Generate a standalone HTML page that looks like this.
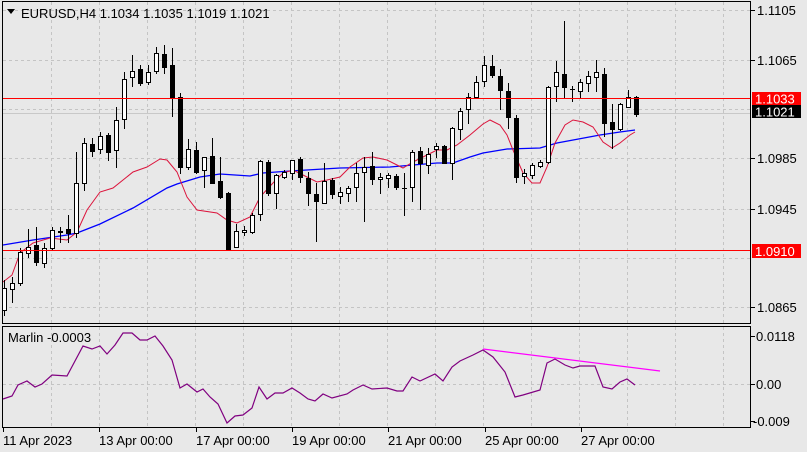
<!DOCTYPE html>
<html><head><meta charset="utf-8"><style>
html,body{margin:0;padding:0;background:#e8e8e8;}
body{width:807px;height:452px;overflow:hidden;font-family:"Liberation Sans",sans-serif;}
svg{display:block}
</style></head><body>
<svg id="s" width="807" height="452" xmlns="http://www.w3.org/2000/svg" font-family="Liberation Sans, sans-serif" font-size="13">
<rect x="0" y="0" width="807" height="452" fill="#e8e8e8"/>
<g id="grid" stroke="#c4c4c4" stroke-dasharray="3,3" stroke-width="1"></g>
<line x1="2" y1="113.5" x2="750" y2="113.5" stroke="#c8c8c8"/>
<g id="ma"></g>
<g id="candles"></g>
<line x1="2" y1="98.5" x2="750" y2="98.5" stroke="#ff0000"/>
<line x1="2" y1="250.5" x2="750" y2="250.5" stroke="#ff0000"/>
<g id="ind"></g>
<rect x="2.5" y="1.5" width="748" height="322" fill="none" stroke="#000"/>
<rect x="2.5" y="326.5" width="748" height="101" fill="none" stroke="#000"/>
<g id="axis" fill="#000"></g>
<polygon points="7,9 15,9 11,14" fill="#000"/>
<text x="21" y="18" fill="#000">EURUSD,H4  1.1034 1.1035 1.1019 1.1021</text>
<text x="8" y="342" fill="#000">Marlin -0.0003</text>
<rect x="752" y="92" width="49" height="13" fill="#ff0000"/>
<text x="755" y="103.5" fill="#fff">1.1033</text>
<rect x="752" y="105" width="49" height="13" fill="#000"/>
<text x="755" y="116.5" fill="#fff">1.1021</text>
<rect x="752" y="244" width="49" height="14" fill="#ff0000"/>
<text x="755" y="256" fill="#fff">1.0910</text>
</svg>
<script>
var NS="http://www.w3.org/2000/svg";
function el(p,t,a){var e=document.createElementNS(NS,t);for(var k in a)e.setAttribute(k,a[k]);document.getElementById(p).appendChild(e);return e;}
for(var x=51;x<=725;x+=48){el("grid","line",{x1:x+.5,y1:2,x2:x+.5,y2:323});el("grid","line",{x1:x+.5,y1:327,x2:x+.5,y2:427});}
[10,60,109,158,209,258,307].forEach(function(y){el("grid","line",{x1:3,y1:y+.5,x2:750,y2:y+.5});});
el("grid","line",{x1:3,y1:384.5,x2:750,y2:384.5});
var C=[[288,310,280,315,1],[283,289,277,302,1],[252,283,248,285,1],[247,253,229,257,1],[245,262,227,265,0],[248,263,243,267,1],[230,248,227,250,1],[231,232,227,242,0],[229,233,215,242,0],[183,233,152,237,1],
[143,183,138,190,1],[144,151,138,156,0],[136,149,132,153,1],[135,152,133,160,0],[120,150,107,167,1],[79,119,72,128,1],[71,77,55,86,1],[69,83,65,85,0],[72,82,65,84,1],[53,71,47,73,1],
[54,67,45,73,0],[65,97,48,116,0],[97,167,93,173,0],[149,167,139,169,1],[150,172,142,173,0],[157,170,157,187,1],[156,183,138,183,0],[181,197,157,198,0],[193,249,192,250,0],[231,247,224,247,1],
[230,232,226,235,1],[215,232,213,233,1],[161,214,160,220,1],[162,193,160,195,0],[175,193,174,208,1],[172,177,170,178,1],[160,173,160,179,1],[159,177,157,182,0],[178,193,172,205,0],[194,201,183,241,0],
[181,203,163,203,1],[180,194,178,198,0],[192,196,187,203,1],[188,193,186,201,1],[173,187,163,201,1],[167,172,157,221,1],[166,179,152,184,0],[177,179,173,193,1],[175,178,173,187,1],[176,187,174,189,0],
[188,188,173,215,0],[152,187,150,201,1],[151,163,147,209,0],[154,165,148,173,1],[146,149,143,157,1],[146,163,145,163,0],[128,163,127,179,1],[111,129,108,139,1],[97,109,93,123,1],[82,97,76,98,1],
[65,81,56,86,1],[66,75,55,77,0],[76,90,69,109,0],[91,117,83,128,0],[118,177,115,182,0],[173,176,169,183,1],[165,175,163,178,1],[162,166,160,167,1],[87,162,86,163,1],[72,86,61,101,1],
[74,87,21,98,0],[89,89,86,101,0],[82,91,79,98,1],[76,83,71,91,1],[72,77,60,91,1],[74,123,68,136,0],[122,129,104,148,0],[104,129,103,130,1],[97,107,90,107,1],[97,114,96,116,0]];
C.forEach(function(c,i){var x=4+8*i;
 el("candles","line",{x1:x+.5,y1:c[2],x2:x+.5,y2:c[3]+1,stroke:"#000"});
 if(c[1]-c[0]<1){el("candles","line",{x1:x-2,y1:c[0]+.5,x2:x+3,y2:c[0]+.5,stroke:"#000"});}
 else el("candles","rect",{x:x-1.5,y:c[0]+.5,width:4,height:c[1]-c[0],fill:c[4]?"#fff":"#000",stroke:"#000"});
});
function pl(p,pts,col,w){el(p,"polyline",{points:pts,fill:"none",stroke:col,"stroke-width":w||1});}
pl("ma","3,245 33,240 67,235 77,233 100,224 133,208 167,188 177,184 200,177 220,174 250,176 263,173 290,171 340,168 390,167 413,165 437,163 453,163 470,157 483,153 507,149 540,148 557,143 600,135 620,132 635,130","#0000ff",1.3);
pl("ma","3,282 12,275 20,253 33,243 50,238 67,240 77,232 87,210 100,192 113,188 133,172 147,167 160,159 167,160 177,172 187,197 197,210 217,213 227,220 237,223 250,217 260,197 273,183 283,173 293,170 307,177 317,182 327,180 340,177 350,167 363,158 373,157 387,160 403,168 413,162 427,155 437,150 447,150 457,145 470,135 483,124 490,120 500,125 507,135 513,150 523,173 532,183 540,183 547,167 555,143 565,125 573,120 583,122 593,127 603,142 612,148 620,143 630,135 635,132","#dc143c",1);
pl("ind","3,399 12,396 18,385 27,381 35,387 42,384 52,375 67,376 83,346 92,349 100,346 107,354 115,345 123,333 132,333 140,340 147,340 155,336 163,346 172,360 180,388 187,384 197,392 203,389 210,397 218,404 227,423 235,416 243,415 252,408 259,387 267,399 275,393 283,393 292,388 300,393 308,399 315,401 323,394 332,398 347,394 353,390 363,385 372,389 387,388 397,391 403,391 412,377 420,381 435,374 443,381 452,367 460,361 473,355 483,350 493,357 505,372 515,397 523,395 540,390 547,363 555,359 565,365 573,368 580,366 595,366 603,387 612,389 620,382 627,379 635,385","#800080",1.2);
pl("ind","483,349 660,371","#ff00ff",1.2);
[[10,"1.1105"],[60,"1.1065"],[158,"1.0985"],[209,"1.0945"],[307,"1.0865"]].forEach(function(a){
 el("axis","line",{x1:751,y1:a[0]+.5,x2:755,y2:a[0]+.5,stroke:"#000"});
 var t=el("axis","text",{x:757,y:a[0]+5});t.textContent=a[1];});
[[336,"0.0118"],[384,"0.00"],[421,"-0.009"]].forEach(function(a){
 el("axis","line",{x1:751,y1:a[0]+.5,x2:755,y2:a[0]+.5,stroke:"#000"});
 var t=el("axis","text",{x:a[1][0]=="-"?753:756,y:a[0]+5});t.textContent=a[1];});
[[3,"11 Apr 2023"],[99,"13 Apr 00:00"],[196,"17 Apr 00:00"],[292,"19 Apr 00:00"],[388,"21 Apr 00:00"],[485,"25 Apr 00:00"],[581,"27 Apr 00:00"]].forEach(function(a){
 el("axis","line",{x1:a[0]+.5,y1:428,x2:a[0]+.5,y2:432,stroke:"#000"});
 var t=el("axis","text",{x:a[0],y:445});t.textContent=a[1];});
</script>
</body></html>
